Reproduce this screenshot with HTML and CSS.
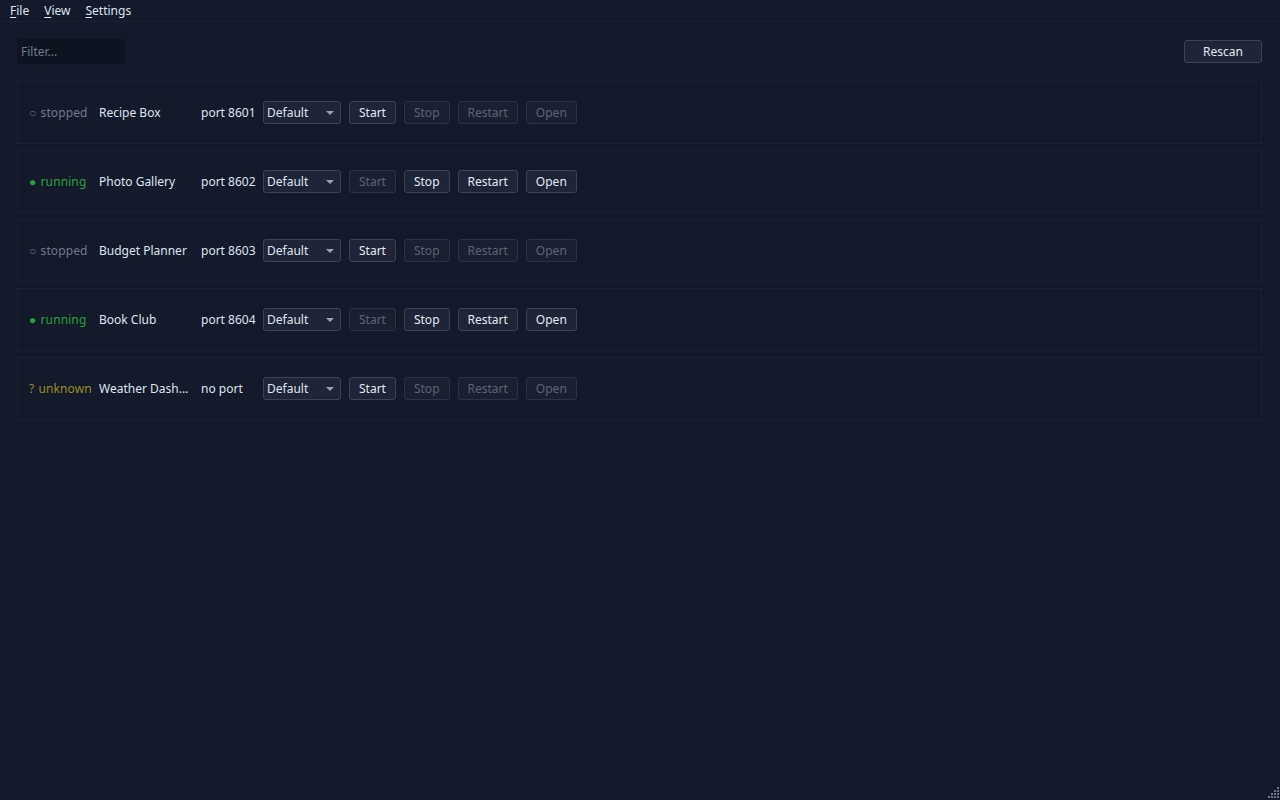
FILE: index.html
```html
<!DOCTYPE html>
<html>
<head>
<meta charset="utf-8">
<link rel="stylesheet" href="styles.css">
</head>
<body>
<div class="menubar">
  <span class="menu"><u>F</u>ile</span>
  <span class="menu"><u>V</u>iew</span>
  <span class="menu"><u>S</u>ettings</span>
</div>
<div class="main">
  <div class="toolbar">
    <div class="filter">Filter...</div>
    <button class="btn rescan">Rescan</button>
  </div>
  <div class="list">
    <div class="row">
      <span class="status stopped">○ stopped</span>
      <span class="name">Recipe Box</span>
      <span class="port">port 8601</span>
      <div class="select">Default<span class="caret"></span></div>
      <button class="btn">Start</button>
      <button class="btn dis">Stop</button>
      <button class="btn dis">Restart</button>
      <button class="btn dis">Open</button>
    </div>
    <div class="row">
      <span class="status running">● running</span>
      <span class="name">Photo Gallery</span>
      <span class="port">port 8602</span>
      <div class="select">Default<span class="caret"></span></div>
      <button class="btn dis">Start</button>
      <button class="btn">Stop</button>
      <button class="btn">Restart</button>
      <button class="btn">Open</button>
    </div>
    <div class="row">
      <span class="status stopped">○ stopped</span>
      <span class="name">Budget Planner</span>
      <span class="port">port 8603</span>
      <div class="select">Default<span class="caret"></span></div>
      <button class="btn">Start</button>
      <button class="btn dis">Stop</button>
      <button class="btn dis">Restart</button>
      <button class="btn dis">Open</button>
    </div>
    <div class="row">
      <span class="status running">● running</span>
      <span class="name">Book Club</span>
      <span class="port">port 8604</span>
      <div class="select">Default<span class="caret"></span></div>
      <button class="btn dis">Start</button>
      <button class="btn">Stop</button>
      <button class="btn">Restart</button>
      <button class="btn">Open</button>
    </div>
    <div class="row">
      <span class="status unknown">? unknown</span>
      <span class="name">Weather Dash...</span>
      <span class="port">no port</span>
      <div class="select">Default<span class="caret"></span></div>
      <button class="btn">Start</button>
      <button class="btn dis">Stop</button>
      <button class="btn dis">Restart</button>
      <button class="btn dis">Open</button>
    </div>
  </div>
</div>
<div class="grip">
  <svg width="12" height="12" viewBox="0 0 12 12">
    <g fill="#6b7384">
      <rect x="10" y="0" width="2" height="2"/>
      <rect x="7" y="3" width="2" height="2"/><rect x="10" y="3" width="2" height="2"/>
      <rect x="4" y="6" width="2" height="2"/><rect x="7" y="6" width="2" height="2"/><rect x="10" y="6" width="2" height="2"/>
      <rect x="1" y="9" width="2" height="2"/><rect x="4" y="9" width="2" height="2"/><rect x="7" y="9" width="2" height="2"/><rect x="10" y="9" width="2" height="2"/>
    </g>
  </svg>
</div>
</body>
</html>
```
FILE: styles.css
```css
html, body {
  margin: 0;
  padding: 0;
  height: 100%;
}
body {
  background: #151a2b;
  color: #dde4ee;
  font-family: "Noto Sans", "Open Sans", sans-serif;
  font-size: 12px;
  overflow: hidden;
  position: relative;
}
.menubar {
  height: 22px;
  display: flex;
  align-items: center;
  gap: 15px;
  padding: 0 10px;
  background: #141a2a;
  border-bottom: 1px solid #1b2133;
  box-sizing: border-box;
}
.menu {
  color: #dde4ee;
  line-height: 21px;
}
.menu u {
  text-decoration-thickness: 1px;
  text-underline-offset: 2px;
}
.main {
  padding: 17px 18px 0 17px;
}
.toolbar {
  display: flex;
  justify-content: space-between;
  align-items: flex-start;
  height: 25px;
}
.filter {
  width: 104px;
  height: 25px;
  line-height: 25px;
  padding-left: 4px;
  background: #0e1320;
  border-radius: 3px;
  color: #727a8a;
}
.btn {
  font-family: inherit;
  font-size: 12px;
  height: 23px;
  padding: 0 9px;
  background: #1f2536;
  border: 1px solid #3a4254;
  border-radius: 3px;
  color: #e3e9f2;
  box-sizing: border-box;
}
.btn.dis {
  color: #5a6273;
  border-color: #2c3344;
  background: #1a2030;
}
.rescan {
  width: 78px;
  height: 23px;
  margin-top: 1px;
}
.list {
  margin-top: 17px;
  display: flex;
  flex-direction: column;
  gap: 6px;
}
.row {
  height: 63px;
  border: 1px solid #1c2234;
  background: #141a2a;
  box-sizing: border-box;
  display: flex;
  align-items: center;
  padding-left: 11px;
  gap: 8px;
}
.status {
  width: 62px;
  white-space: nowrap;
  word-spacing: 1px;
  letter-spacing: 0.1px;
}
.stopped { color: #717989; }
.running { color: #27a03a; }
.unknown { color: #968a2c; }
.name {
  width: 94px;
  white-space: nowrap;
}
.port {
  width: 54px;
  white-space: nowrap;
}
.select {
  width: 78px;
  height: 23px;
  box-sizing: border-box;
  border: 1px solid #3a4254;
  background: #1f2536;
  border-radius: 3px;
  padding-left: 3px;
  line-height: 21px;
  position: relative;
}
.caret {
  position: absolute;
  right: 6px;
  top: 9px;
  border-left: 4px solid transparent;
  border-right: 4px solid transparent;
  border-top: 4px solid #9aa2b2;
}
.grip {
  position: absolute;
  right: 1px;
  bottom: 1px;
  line-height: 0;
}
```
